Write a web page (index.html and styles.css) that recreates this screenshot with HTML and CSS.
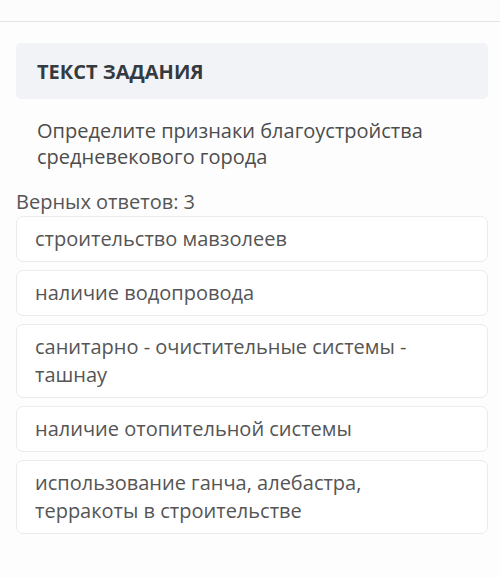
FILE: index.html
```html
<!DOCTYPE html>
<html lang="ru">
<head>
<meta charset="utf-8">
<link rel="stylesheet" href="styles.css">
</head>
<body>
<div class="topbar"></div>
<main class="content">
  <div class="task-header">ТЕКСТ ЗАДАНИЯ</div>
  <p class="question">Определите признаки благоустройства средневекового города</p>
  <div class="count">Верных ответов: 3</div>
  <ul class="answers">
    <li class="answer">строительство мавзолеев</li>
    <li class="answer">наличие водопровода</li>
    <li class="answer">санитарно - очистительные системы - ташнау</li>
    <li class="answer">наличие отопительной системы</li>
    <li class="answer">использование ганча, алебастра, терракоты в строительстве</li>
  </ul>
</main>
</body>
</html>
```
FILE: styles.css
```css
html, body {
  margin: 0;
  padding: 0;
  background: #fdfdfd;
  font-family: "Open Sans", "Noto Sans", sans-serif;
  color: #4a4a4a;
}
.topbar {
  height: 21px;
  border-bottom: 1px solid #e4e4e6;
  background: #fcfcfc;
}
.content {
  padding: 21px 12px 0 16px;
}
.task-header {
  background: #f2f3f7;
  border-radius: 5px;
  height: 56px;
  display: flex;
  align-items: center;
  padding-left: 21px;
  font-weight: 700;
  font-size: 20px;
  color: #353a40;
}
.question {
  margin: 19px 0 0 0;
  padding-left: 21px;
  padding-right: 40px;
  font-size: 20px;
  line-height: 26px;
  color: #4d4d4d;
}
.count {
  margin-top: 19px;
  font-size: 20px;
  line-height: 26px;
  color: #555;
}
.answers {
  list-style: none;
  margin: 1px 0 0 0;
  padding: 0;
  display: flex;
  flex-direction: column;
  gap: 8px;
}
.answer {
  border: 1px solid #ebebed;
  border-radius: 7px;
  background: #fff;
  padding: 8px 60px 8px 18px;
  font-size: 20px;
  line-height: 28px;
  color: #555;
}
```
